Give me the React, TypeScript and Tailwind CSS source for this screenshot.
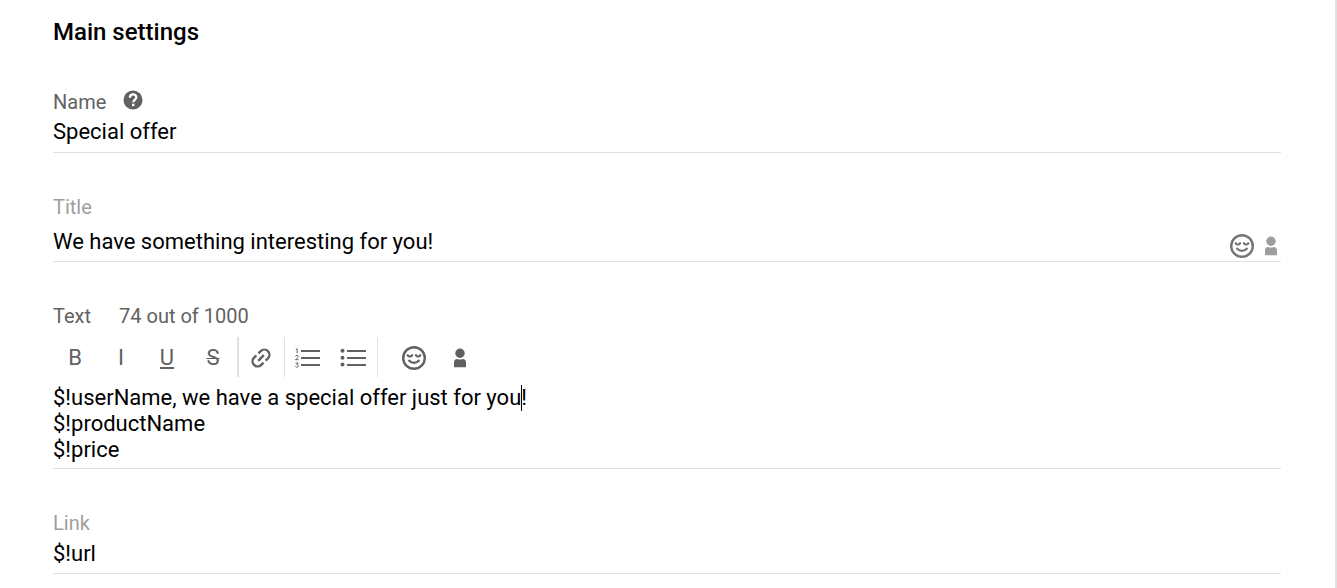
import { useState } from "react";
import type { ReactNode } from "react";

function SmileIcon() {
  return (
    <svg className="size-6 shrink-0" viewBox="0 0 24 24" fill="none" stroke="currentColor" strokeWidth="2.4" strokeLinecap="round" aria-hidden="true">
      <circle cx="12" cy="12" r="10.8" />
      <path d="M5.700 9.200c.9 1.700 3.500 1.700 4.400 0M13.900 9.200c.9 1.700 3.500 1.700 4.400 0" strokeWidth="2.200" />
      <path d="M7.200 14.600c2 2.900 7.600 2.900 9.600 0" strokeWidth="2.300" />
    </svg>
  );
}

function PersonIcon() {
  return (
    <svg className="h-5 w-3 shrink-0" viewBox="0 0 12 20" fill="currentColor" aria-hidden="true">
      <circle cx="6" cy="5.300" r="4.700" />
      <path d="M0 19.300v-4.800Q0 11 3.200 11q2.800 1 5.600 0Q12 11 12 14.500v4.800Z" />
    </svg>
  );
}

function HelpIcon() {
  return (
    <svg className="size-5" viewBox="0 0 20 20" aria-hidden="true">
      <circle cx="10" cy="10" r="9.500" fill="currentColor" />
      <path d="M6.900 7.800C6.900 3.300 13.300 3.600 13.300 7.200c0 2.500-3 2.600-3 5" fill="none" stroke="#fff" strokeWidth="2.300" />
      <rect x="9" y="13.700" width="2.400" height="2.400" fill="#fff" />
    </svg>
  );
}

function LinkIcon() {
  return (
    <svg className="size-6 shrink-0 -rotate-45" viewBox="0 0 24 24" fill="none" stroke="currentColor" strokeWidth="2.400" aria-hidden="true">
      <path d="M10.500 6.900H7.300a5.100 5.100 0 0 0 0 10.200h3.200M13.500 6.900h3.200a5.100 5.100 0 0 1 0 10.200h-3.200M8 12h8" />
    </svg>
  );
}

function NumberedListIcon() {
  return (
    <svg className="h-5 w-[26px]" viewBox="0 0 26 20" fill="none" stroke="currentColor" aria-hidden="true">
      <path d="M7 3h19M7 10h19M7 17h19" strokeWidth="2" />
      <path d="M1.800 1.700l1.400-.9v4.400M1.500 8.400C1.700 7 4.300 7 4.300 8.500c0 1-2 2-2.800 3.200h3M1.600 15h2.600l-1.400 1.600c2.200 0 2 2.600 0 2.600-.7 0-1.200-.3-1.500-.8" strokeWidth="1" />
    </svg>
  );
}

function BulletListIcon() {
  return (
    <svg className="h-5 w-[26px]" viewBox="0 0 26 20" aria-hidden="true">
      <path d="M7 3h19M7 10h19M7 17h19" stroke="currentColor" strokeWidth="2" />
      <g fill="currentColor">
        <circle cx="2.500" cy="2.800" r="2" />
        <circle cx="2.500" cy="9.800" r="2" />
        <circle cx="2.500" cy="16.500" r="2" />
      </g>
    </svg>
  );
}

function Tool({ label, children }: { label: string; children: ReactNode }) {
  return (
    <button type="button" aria-label={label} className="flex h-10 w-[46px] items-center justify-center pt-0.5 pr-0.5 text-[22px] leading-[26px]">
      {children}
    </button>
  );
}

const fieldClass = "block w-full min-w-0 bg-transparent text-[22px] leading-[26px] text-black outline-none";
const lineClass = "border-b border-[#e0e0e0]";

export default function App() {
  const [name, setName] = useState("Special offer");
  const [title, setTitle] = useState("We have something interesting for you!");
  const [text, setText] = useState("$!userName, we have a special offer just for you!\n$!productName\n$!price");
  const [link, setLink] = useState("$!url");

  return (
    <main className="min-h-screen border-r-2 border-[#e0e0e0] bg-white pt-[18px] pr-[54px] pb-3.5 pl-[53px] font-[Roboto,sans-serif] text-[#616161]">
      <h1 className="text-[24px] leading-[28px] font-medium text-black">Main settings</h1>

      <form className="mt-11 flex flex-col gap-[42px] text-[20px] leading-6">
        <div className={`pb-[7px] ${lineClass}`}>
          <div className="flex items-center gap-[17px]">
            <label htmlFor="name">Name</label>
            <button type="button" aria-label="Help" className="-mt-1">
              <HelpIcon />
            </button>
          </div>
          <input id="name" value={name} onChange={(e) => setName(e.target.value)} className={`mt-[5px] h-[26px] ${fieldClass}`} />
        </div>

        <div className={`pb-[3px] ${lineClass}`}>
          <label htmlFor="title" className="block text-[#9e9e9e]">Title</label>
          <div className="mt-2.5 flex items-end gap-[11px] pr-1">
            <input id="title" value={title} onChange={(e) => setTitle(e.target.value)} className={`mb-[3px] h-[26px] ${fieldClass}`} />
            <button type="button" aria-label="Insert emoji" className="text-[#757575]">
              <SmileIcon />
            </button>
            <button type="button" aria-label="Insert user attribute" className="mb-0.5 text-[#9e9e9e]">
              <PersonIcon />
            </button>
          </div>
        </div>

        <div className={`pb-[5px] ${lineClass}`}>
          <div className="flex gap-7">
            <label htmlFor="text">Text</label>
            <span>74 out of 1000</span>
          </div>
          <div className="mt-[9px] flex" role="toolbar" aria-label="Formatting">
            <Tool label="Bold">B</Tool>
            <Tool label="Italic">I</Tool>
            <Tool label="Underline">
              <span className="underline decoration-2 underline-offset-2">U</span>
            </Tool>
            <Tool label="Strikethrough">
              <s className="decoration-1">S</s>
            </Tool>
            <div className="flex w-12 border-r border-l-2 border-[#e0e0e0]">
              <Tool label="Link"><LinkIcon /></Tool>
            </div>
            <div className="flex border-r border-[#e0e0e0]">
              <Tool label="Numbered list"><NumberedListIcon /></Tool>
              <Tool label="Bulleted list"><BulletListIcon /></Tool>
            </div>
            <div className="ml-3.5 flex">
              <Tool label="Emoji"><SmileIcon /></Tool>
              <Tool label="User attribute"><PersonIcon /></Tool>
            </div>
          </div>
          <div className="relative mt-2">
            <textarea id="text" rows={3} value={text} onChange={(e) => setText(e.target.value)} className={`resize-none overflow-hidden ${fieldClass}`} />
            <span className="absolute top-0 left-[468px] h-[26px] w-px bg-black" />
          </div>
        </div>

        <div className={`pb-1.5 ${lineClass}`}>
          <label htmlFor="link" className="block text-[#9e9e9e]">Link</label>
          <input id="link" value={link} onChange={(e) => setLink(e.target.value)} className={`mt-1.5 h-[26px] ${fieldClass}`} />
        </div>
      </form>
    </main>
  );
}
